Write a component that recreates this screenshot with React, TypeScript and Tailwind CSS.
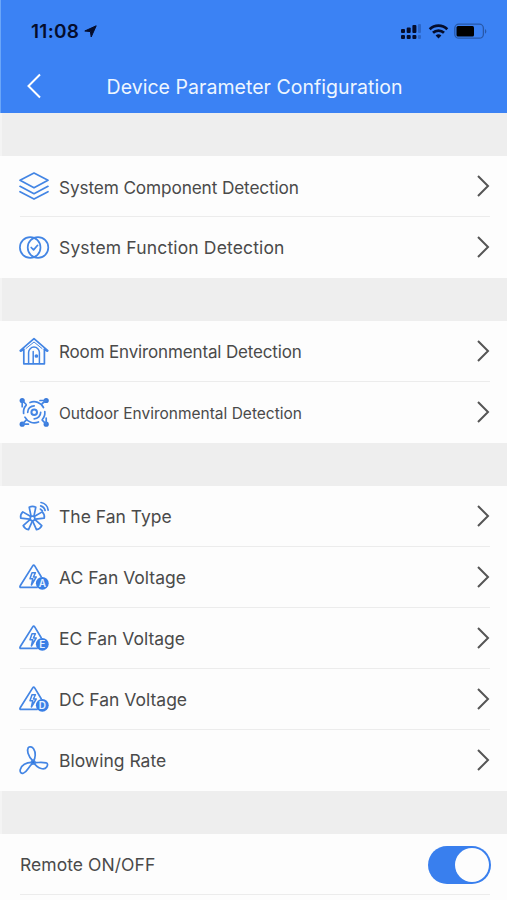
import { ReactNode, useState } from 'react';

interface RowProps {
  icon: ReactNode;
  label: string;
  labelClass?: string;
  last?: boolean;
}

export default function App() {
  const [remoteOn, setRemoteOn] = useState(true);

  return (
    <div className="h-[900px] w-full max-w-[507px] overflow-hidden bg-[#fdfdfd] font-['Inter',sans-serif] text-[#4a4a4a]">
      <header className="h-[113px] bg-[#3b82f4] border-l border-[#6ba6f8]">
        <StatusBar />
        <div className="relative flex h-[49px] items-center justify-center">
          <button aria-label="Back" className="absolute left-[25px] top-[11px]">
            <svg width="16" height="26" viewBox="0 0 16 26" fill="none" stroke="#fff" strokeWidth="2">
              <path d="M14 1.5 2.5 13 14 24.5" />
            </svg>
          </button>
          <h1 className="whitespace-nowrap pl-[1px] text-[19.5px] leading-6 tracking-[0.04px] text-[#eef6ff]">Device Parameter Configuration</h1>
        </div>
      </header>

      <Gap />
      <section>
        <Row icon={<LayersIcon />} label="System Component Detection" labelClass="text-[17.25px] tracking-[-0.14px] pt-[3px]" />
        <Row icon={<FunctionIcon />} label="System Function Detection" labelClass="text-[17.5px] tracking-[0.15px] pt-[3px]" last />
      </section>
      <Gap />
      <section>
        <Row icon={<HouseIcon />} label="Room Environmental Detection" labelClass="text-[17px] tracking-[-0.15px] pt-[3px]" />
        <Row icon={<OutdoorIcon />} label="Outdoor Environmental Detection" labelClass="text-[15.5px] pt-[4px]" last />
      </section>
      <Gap />
      <section>
        <Row icon={<FanIcon />} label="The Fan Type" />
        <Row icon={<VoltageIcon letter="A" />} label="AC Fan Voltage" />
        <Row icon={<VoltageIcon letter="E" />} label="EC Fan Voltage" />
        <Row icon={<VoltageIcon letter="D" />} label="DC Fan Voltage" />
        <Row icon={<BlowerIcon />} label="Blowing Rate" last />
      </section>
      <Gap />
      <section className="ml-5 mr-[17px] flex h-[61px] items-center justify-between border-b border-[#ececec]">
        <span className="pt-[3px] text-[17.5px] tracking-[0.05px]">Remote ON/OFF</span>
        <button
          role="switch"
          aria-checked={remoteOn}
          aria-label="Remote ON/OFF"
          onClick={() => setRemoteOn(!remoteOn)}
          className={`-mr-px mt-[2px] flex h-[38px] w-[63px] items-center rounded-full px-[2px] ${remoteOn ? 'justify-end bg-[#397fee]' : 'justify-start bg-gray-300'}`}
        >
          <span className="size-[34px] rounded-full bg-[#fdfdfd]" />
        </button>
      </section>
    </div>
  );
}

function StatusBar() {
  return (
    <div className="flex h-[62px] items-center justify-between pl-[30px] pr-[20px] text-[#050d2c]">
      <div className="flex items-center gap-[5px]">
        <span className="pt-px text-[19px] font-semibold leading-6 tracking-[0.3px]">11:08</span>
        <svg width="13" height="13" viewBox="0 0 13 13" fill="currentColor" stroke="currentColor" strokeWidth="1" strokeLinejoin="round">
          <path d="M12.2.8 7.2 12 6.4 6.6.8 6Z" />
        </svg>
      </div>
      <svg width="86" height="18" viewBox="0 0 86 18">
        <g fill="currentColor">
          <rect x="0" y="7" width="4" height="4" rx="1" />
          <rect x="5.7" y="5.5" width="4" height="5.5" rx="1" />
          <rect x="11.4" y="3" width="4" height="8" rx="1" />
          <rect x="0" y="13" width="4" height="4" rx="1" />
          <rect x="5.7" y="13" width="4" height="4" rx="1" />
          <rect x="11.4" y="13" width="4" height="4" rx="1" />
        </g>
        <g fill="#2b66c9">
          <rect x="17" y="2" width="3" height="9" rx="1" />
          <rect x="17" y="13" width="3" height="4" rx="1" />
        </g>
        <g fill="none" stroke="currentColor" strokeWidth="2.7">
          <path d="M28.7 7.2a12.5 12.5 0 0 1 17.6 0" />
          <path d="M32 10.8a7.8 7.8 0 0 1 11 0" />
        </g>
        <path d="M37.5 16.5 34.6 13.6a4.1 4.1 0 0 1 5.8 0Z" fill="currentColor" />
        <rect x="53.8" y="2.2" width="28.6" height="14" rx="4" fill="none" stroke="#2858a8" strokeWidth="1.3" />
        <rect x="55.5" y="4" width="17.5" height="10.5" rx="1.5" fill="#000" />
        <path d="M84 7v4.8c1.8-.8 1.8-4 0-4.8Z" fill="#2858a8" />
      </svg>
    </div>
  );
}

function Gap() {
  return <div className="h-[43px] border-l-2 border-[#f4f4f4] bg-[#eeeeee]" />;
}

function Row({ icon, label, labelClass = 'text-[17.5px] pt-[3px]', last }: RowProps) {
  return (
    <div className={`ml-5 mr-[17px] flex h-[61px] items-center border-b ${last ? 'border-transparent' : 'border-[#ececec]'}`}>
      <span className="-ml-[2px] flex w-[41px] shrink-0">{icon}</span>
      <span className={`flex-1 whitespace-nowrap ${labelClass}`}>{label}</span>
      <svg className="-mt-px" width="14" height="22" viewBox="0 0 14 22" fill="none" stroke="#555" strokeWidth="2">
        <path d="M2 1 12 11 2 21" />
      </svg>
    </div>
  );
}

function Icon({ children }: { children: ReactNode }) {
  return (
    <svg width="32" height="32" viewBox="0 0 32 32" fill="none" stroke="#4385e4" strokeWidth="1.7" strokeLinecap="round" strokeLinejoin="round">
      {children}
    </svg>
  );
}

function LayersIcon() {
  return (
    <Icon>
      <path d="M16 3 30 10.3 16 17.8 2 10.3Z" />
      <path d="m2 16.3 14 7.4 14-7.4M2 21.7l14 7.4 14-7.4" />
    </Icon>
  );
}

function FunctionIcon() {
  return (
    <Icon>
      <circle cx="12.2" cy="16.5" r="10.3" />
      <circle cx="20" cy="16.5" r="10.3" />
      <path d="m13.2 16.5 2.4 2.4 4-4.6" />
    </Icon>
  );
}

function HouseIcon() {
  return (
    <Icon>
      <path d="M5.5 14.5 2.7 16.2 2.2 15.6 16 3.6 29.8 15.6 29.3 16.2 26.5 14.5" />
      <path d="M5.8 14v14.8h20.6V14" />
      <path d="M10.6 28.500V17.500a5.400 5.400 0 0 1 10.800 0v11M15.200 28.500V16.500" strokeWidth="1.5" />
      <path d="M8 13.500 16 7l8 6.500" strokeWidth="1" />
      <circle cx="18.400" cy="21" r="1" fill="#4385e4" />
    </Icon>
  );
}

function OutdoorIcon() {
  return (
    <Icon>
      <g fill="#3b7bda" stroke="none">
        <circle cx="4.2" cy="4.5" r="2.6" />
        <circle cx="28.2" cy="4.5" r="2.6" />
        <circle cx="4.2" cy="28.2" r="2.6" />
        <circle cx="28.2" cy="28.2" r="2.6" />
      </g>
      <circle cx="16.2" cy="16.3" r="2.8" strokeWidth="2" />
      <path d="M9.7 16.3a6.5 6.5 0 0 1 6.5-6.5M22.7 16.3a6.5 6.5 0 0 1-6.5 6.5" />
      <path d="M12 6.500a10.600 10.600 0 0 1 13.500 5M20.500 26a10.600 10.600 0 0 1-13.600-4.800" />
      <path d="m4.200 4.500 4 4M4.200 4.500v6.200M28.200 4.500l-4 3M28.200 4.500h-6.200M4.200 28.200l4-4M4.200 28.200h6.200M28.200 28.200l-4-4M28.200 28.200V22M5.600 17.500a10.600 10.600 0 0 1 2.600-8.400M26.800 15.500a10.600 10.600 0 0 1-2.600 8.200" />
    </Icon>
  );
}

const fanAngles = [0, 72, 144, 216, 288];

function FanIcon() {
  return (
    <Icon>
      {fanAngles.map((angle) => (
        <path
          key={angle}
          transform={`rotate(${angle} 14.5 18.5)`}
          d="M13 15.8 11.200 7.200q3.300-1.800 6.600 0L16 15.8"
        />
      ))}
      <circle cx="14.5" cy="18.5" r="2.300" />
      <path d="M22.700 5.900a6 6 0 0 1 4.400 4.600M23 2.500a8.500 8.500 0 0 1 7.100 7.600M22.400 9.100l2 1.700" />
    </Icon>
  );
}

function VoltageIcon({ letter }: { letter: string }) {
  return (
    <Icon>
      <path d="M19 26.4H3.1q-1.8 0-.9-1.6L14.7 4.900q1-1.400 2 0l6.500 10.900" />
      <path d="m14 11.700-2 6h2.800l-1.400 6.300 4.800-8h-2.800l2-4.300Z" strokeWidth="1.5" />
      <circle cx="24.300" cy="22.300" r="6.400" fill="#397fe6" stroke="none" />
      <text x="24.300" y="26" textAnchor="middle" fontSize="10" fontWeight="600" fill="#e4f1ff" stroke="none">
        {letter}
      </text>
    </Icon>
  );
}

function BlowerIcon() {
  return (
    <Icon>
      <path d="M15 17C9.500 12 8.800 6 10.300 3.500c1.300-1.200 3.800-.8 5.400 1.500C18 8.500 17.500 14 15.500 17" />
      <path d="M15 18.500C8 18 3.200 21.500 2.300 25.500c-.7 3 1 4.300 3 3.700C9.500 28 10 23 15 18.800" />
      <path d="M15.500 18.500c4.500.2 9-.4 12.600.3 1.800.5 1.800 2.400.6 4.200-2.200 3.200-8.500 2.300-13-4.300" />
      <circle cx="15.200" cy="18.200" r="1.700" fill="#2f73dd" />
    </Icon>
  );
}
